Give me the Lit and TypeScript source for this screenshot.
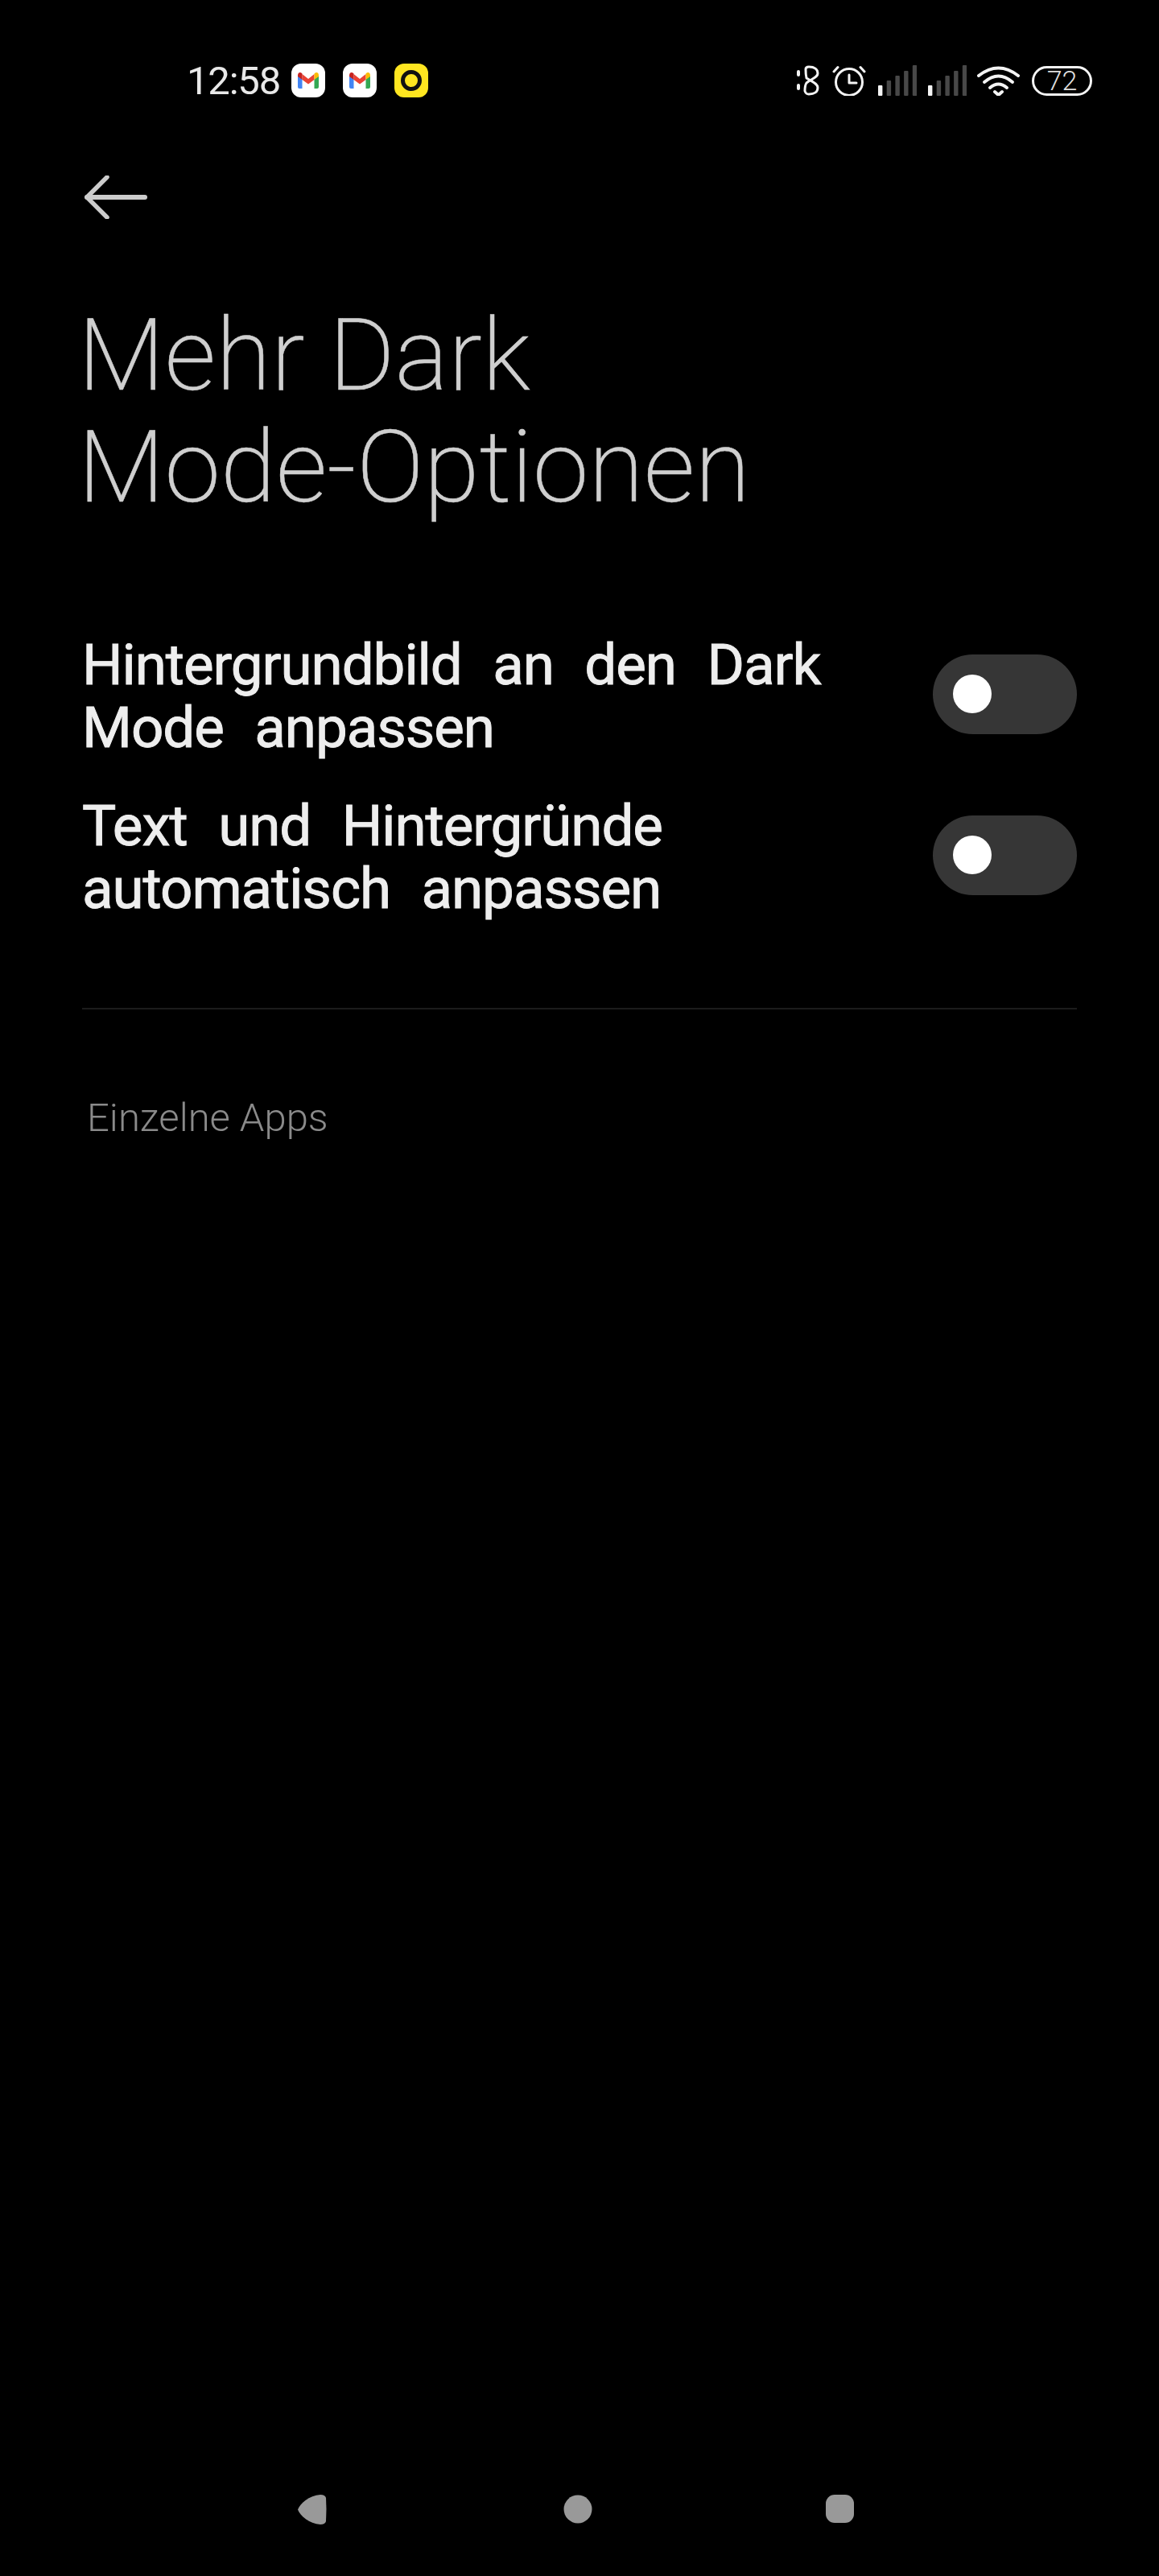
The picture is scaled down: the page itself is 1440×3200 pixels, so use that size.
import { LitElement, html, css, svg } from 'lit';
import { customElement } from 'lit/decorators.js';

const gmail = svg`
  <path d="M8 15 L13.5 19 V31 H10 Q8 31 8 29 Z" fill="#4285f4"/>
  <path d="M28.5 19 L34 15 V29 Q34 31 32 31 H28.5 Z" fill="#34a853"/>
  <path d="M13.5 13 L21 19 L28.5 13 V20 L21 25.500 L13.500 20 Z" fill="#ea4335"/>
  <path d="M8 15 Q8 11 11 11 Q12.500 11 13.500 12.500 V20 L8 16 Z" fill="#c5221f"/>
  <path d="M28.500 12.500 Q29.500 11 31 11 Q34 11 34 15 V16 L28.500 20 Z" fill="#fbbc04"/>
`;

@customElement('status-bar')
export class StatusBar extends LitElement {
  static styles = css`
    :host {
      display: flex;
      align-items: center;
      height: 42px;
      padding: 79px 83px 0 232px;
      color: #e8e8e8;
      font-family: Roboto, sans-serif;
    }
    .time {
      font-size: 49px;
      width: 130px;
      letter-spacing: -1.2px;
    }
    .notif {
      width: 42px;
      height: 42px;
      border-radius: 12px;
      margin-right: 22px;
      display: block;
    }
    .white { background: #fff; }
    .yellow { background: #ffe620; }
    .right {
      margin-left: auto;
      display: flex;
      align-items: center;
    }
    .right svg { display: block; }
    .battery {
      box-sizing: border-box;
      width: 75px;
      height: 37px;
      border: 3px solid #f4f4f4;
      border-radius: 19px;
      display: flex;
      align-items: center;
      justify-content: center;
      font-size: 34px;
      font-weight: 300;
      color: #ddd;
      margin-left: 15px;
    }
    .bt { margin-right: 16px; }
    .alarm { margin-right: 15px; }
    .sig { margin-right: 14px; }
    .sig2 { margin-right: 13px; }
  `;

  signal(cls: string) {
    const bars = [13, 19, 25, 31, 38];
    return html`<svg class=${cls} width="48" height="38" viewBox="0 0 48 38">
      ${bars.map(
        (h, i) => svg`<rect x=${i * 10.7} y=${38 - h} width="5.400" height=${h} rx="1" fill=${i === 0 ? '#f4f4f4' : '#484848'}></rect>`
      )}
    </svg>`;
  }

  render() {
    return html`
      <span class="time">12:58</span>
      <svg class="notif white" viewBox="0 0 42 42">${gmail}</svg>
      <svg class="notif white" viewBox="0 0 42 42">${gmail}</svg>
      <svg class="notif yellow" viewBox="0 0 42 42">
        <circle cx="21" cy="21" r="10.500" fill="none" stroke="#111" stroke-width="5"></circle>
      </svg>
      <div class="right">
        <svg class="bt" width="28" height="38" viewBox="0 0 28 38" fill="none" stroke="#f4f4f4" stroke-width="3" stroke-linecap="round" stroke-linejoin="round">
          <path d="M2 8 V12 M2 25 V29" stroke-width="4"></path>
          <path d="M11 5 Q11 2 15 2 C22 2 26 5 26 10 C26 15 20 16 12 22 Q10 25 10 32 Q11 36 15 36 C22 36 26 33 26 28 C26 23 20 21 12 16 Q11 12 11 5 Z"></path>
        </svg>
        <svg class="alarm" width="42" height="38" viewBox="0 0 42 38" fill="none" stroke="#f4f4f4" stroke-linecap="round" stroke-linejoin="round">
          <circle cx="21" cy="21" r="16.500" stroke-width="3"></circle>
          <path d="M21 12 V22 H30" stroke-width="3"></path>
          <path d="M2 8 L7 2.500 M35 2.500 L40 8" stroke-width="3"></path>
        </svg>
        ${this.signal('sig')}
        ${this.signal('sig2')}
        <svg width="53" height="38" viewBox="0 0 53 38" fill="none" stroke="#f4f4f4" stroke-width="4" stroke-linecap="round" stroke-linejoin="round">
          <path d="M2 13 Q26.500 -6 51 13"></path>
          <path d="M9 21 Q26.500 6 44 21"></path>
          <path d="M16 28 Q26.500 19 37 28"></path>
          <path d="M22 33 L26.500 37 L31 33"></path>
        </svg>
        <span class="battery">72</span>
      </div>
    `;
  }
}

@customElement('setting-row')
export class SettingRow extends LitElement {
  static properties = { label: {} };
  label = '';

  static styles = css`
    :host {
      display: flex;
      align-items: center;
      justify-content: space-between;
      padding: 0 102px;
    }
    .label {
      width: 960px;
      margin: 3px 0 -3px;
      font-family: Roboto, sans-serif;
      font-size: 71px;
      line-height: 78px;
      font-weight: 400;
      letter-spacing: -1.1px;
      word-spacing: 22px;
      color: #eeeeee;
      -webkit-text-stroke: 0.9px #eeeeee;
    }
    .toggle {
      width: 179px;
      height: 99px;
      border-radius: 50px;
      background: #363636;
      display: flex;
      align-items: center;
      padding-left: 25px;
      box-sizing: border-box;
    }
    .knob {
      width: 48px;
      height: 48px;
      border-radius: 50%;
      background: #fff;
    }
  `;

  render() {
    return html`
      <div class="label">${this.label}</div>
      <div class="toggle"><div class="knob"></div></div>
    `;
  }
}

@customElement('app-root')
export class AppRoot extends LitElement {
  static styles = css`
    :host {
      display: flex;
      flex-direction: column;
      width: 1440px;
      height: 3200px;
      background: #000;
      font-family: Roboto, sans-serif;
    }
    .back {
      display: block;
      margin: 97px 0 0 105px;
    }
    h1 {
      margin: 100px 0 0 97px;
      font-family: Roboto, sans-serif;
      font-size: 125px;
      line-height: 139px;
      font-weight: 200;
      color: #cfcfcf;
      -webkit-text-stroke: 0.5px #cfcfcf;
    }
    .rows {
      display: flex;
      flex-direction: column;
      gap: 44px;
      margin-top: 134px;
    }
    .divider {
      height: 2px;
      background: #1c1c1c;
      margin: 112px 102px 0;
    }
    .section {
      margin: 105px 0 0 108px;
      font-size: 49px;
      line-height: 60px;
      font-weight: 300;
      color: #8a8a8a;
    }
    .nav {
      margin-top: auto;
      margin-bottom: 64px;
      display: flex;
      padding-left: 370px;
    }
    .nav svg { display: block; fill: #999; }
    .nav .circle { margin-left: 294px; }
    .nav .square { margin-left: 290px; }
  `;

  render() {
    return html`
      <status-bar></status-bar>
      <svg class="back" width="78" height="54" viewBox="0 0 78 54" fill="none" stroke="#cccccc" stroke-width="5.500" stroke-linecap="round" stroke-linejoin="round">
        <path d="M28 2 L3 27 L28 52"></path>
        <path d="M3 27 H75" stroke-width="6"></path>
      </svg>
      <h1>Mehr Dark<br />Mode-Optionen</h1>
      <div class="rows">
        <setting-row label="Hintergrundbild an den Dark Mode anpassen"></setting-row>
        <setting-row label="Text und Hintergründe automatisch anpassen"></setting-row>
      </div>
      <div class="divider"></div>
      <div class="section">Einzelne Apps</div>
      <div class="nav">
        <svg width="36" height="37" viewBox="0 0 36 37">
          <path d="M0 18.500 C3 11 14 1 28 0 Q34 0 35 4 Q36 18 35 33 Q34 37 28 37 C14 36 3 26 0 18.500 Z"></path>
        </svg>
        <svg class="circle" width="36" height="36" viewBox="0 0 36 36"><circle cx="18" cy="18" r="17.500"></circle></svg>
        <svg class="square" width="36" height="36" viewBox="0 0 36 36"><rect width="35" height="35" rx="11"></rect></svg>
      </div>
    `;
  }
}
